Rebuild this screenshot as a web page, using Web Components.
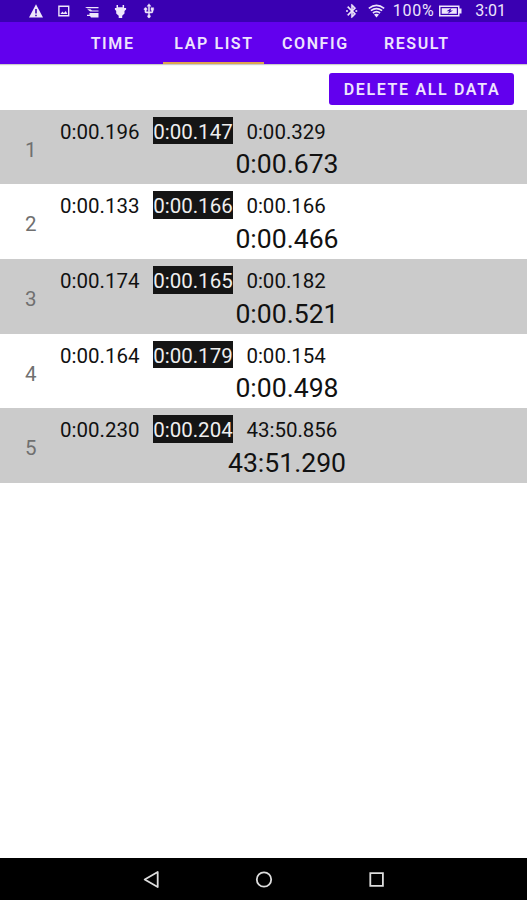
<!DOCTYPE html>
<html lang="en">
<head>
<meta charset="utf-8">
<title>Lap List</title>
<style>
  body {
    margin: 0;
    font-family: Roboto, "Liberation Sans", sans-serif;
    background: #fff;
  }
</style>
</head>
<body>
<lap-app></lap-app>

<script>
const laps = [
  { times: ['0:00.196', '0:00.147', '0:00.329'], total: '0:00.673' },
  { times: ['0:00.133', '0:00.166', '0:00.166'], total: '0:00.466' },
  { times: ['0:00.174', '0:00.165', '0:00.182'], total: '0:00.521' },
  { times: ['0:00.164', '0:00.179', '0:00.154'], total: '0:00.498' },
  { times: ['0:00.230', '0:00.204', '43:50.856'], total: '43:51.290' }
]

window.customElements.define('status-bar', class extends HTMLElement {
  constructor() {
    super();
    const root = this.attachShadow({ mode: 'open' });

    root.innerHTML = `
    <style>
      :host {
        display: flex;
        justify-content: space-between;
        align-items: center;
        box-sizing: border-box;
        height: 22px;
        padding: 0 21px 0 28px;
        background: #3a00b2;
        color: #eee6fb;
        font-size: 16px;
        line-height: 22px;
      }
      div {
        display: flex;
        align-items: center;
      }
      .left {
        gap: 12.2px;
      }
      svg {
        display: block;
        width: 16px;
        height: 16px;
        fill: currentColor;
      }
      .wifi {
        width: 17px;
        margin: 0 7.5px 0 8px;
      }
      .battery {
        width: 23px;
        margin: 0 13.5px 0 1px;
      }
      .percent {
        width: 45px;
        white-space: nowrap;
        letter-spacing: 0.8px;
      }
    </style>
    <div class="left">
      <svg viewBox="0 0 16 16"><path fill-rule="evenodd" d="M8 1.2 15 14.5H1ZM7.2 6v4.5h1.6V6ZM7.2 11.7v1.5h1.6v-1.5Z"/></svg>
      <svg viewBox="0 0 16 16"><path fill-rule="evenodd" d="M2.2 2.5h11.2v11H2.2ZM3.6 4v8.1H12V4ZM4.4 11l2-2.6 1.5 1.5L9.8 8l1.6 3Z"/></svg>
      <svg viewBox="0 0 16 16"><path d="M1 4h13.5v1.3H3.2ZM3.2 6.3h3.3L8 7.600h6.500v1H6.200ZM5.500 10h9v4.500H7l-1-1.500H3v-1.200h2.500Z"/></svg>
      <svg viewBox="0 0 16 16"><path d="M3.500 2H5v2.200h4.600V2h1.500v3h2v1.500L11.500 8v2.500L9.200 12.800V15H5.700v-2.200L3.200 10.500V8L1.900 6.500V5h1.600Z"/></svg>
      <svg viewBox="0 0 24 24" stroke="currentColor" stroke-width=".6"><path d="M15 7v4h1v2h-3V5h2l-3-4-3 4h2v8H8v-2.070A2.200 2.200 0 1 0 5.800 11v2a2 2 0 0 0 2 2H11v3.050a2.200 2.200 0 1 0 2 0V15h3a2 2 0 0 0 2-2v-2h1V7Z"/></svg>
    </div>
    <div>
      <svg viewBox="0 0 24 24" stroke="currentColor" stroke-width=".7"><path fill-rule="evenodd" d="M17.700 7.700 12 2h-1v7.600L6.400 5 5 6.400l5.600 5.600L5 17.600 6.400 19l4.600-4.600V22h1l5.700-5.700-4.300-4.300ZM13 5.800l1.900 1.900L13 9.600ZM14.900 16.300 13 18.200v-3.800Z"/><path d="M4.500 10.500 6 12l-1.500 1.500L3 12ZM18.500 10.500 20 12l-1.500 1.500L17 12Z"/></svg>
      <svg class="wifi" viewBox="0 0 17 16"><g fill="none" stroke="currentColor" stroke-width="1.600"><path d="M.8 5.300Q8.500-.5 16.200 5.300M2.900 7.700Q8.500 3.500 14.100 7.700M4.900 10Q8.500 7.200 12.100 10"/></g><path d="M6 11.500Q8.500 9.800 11 11.500L8.500 14.500Z"/></svg>
      <span class="percent">100%</span>
      <svg class="battery" viewBox="0 0 23 16"><path fill-rule="evenodd" d="M0 2.500h20.500v3H22.500v5h-2v3H0ZM1.500 4v8H19V4Z"/><path d="M2.700 5.200H17.800v5.600H2.700Z"/><path d="m12.500 5-5 3.300h2.800L8.500 11l5.500-3.500h-2.700Z" fill="#3a00b2"/></svg>
      <span>3:01</span>
    </div>
    `
  }
});

window.customElements.define('app-tab', class extends HTMLElement {
  constructor() {
    super();
    const root = this.attachShadow({ mode: 'open' });

    root.innerHTML = `
    <style>
      :host {
        display: block;
        box-sizing: border-box;
        height: 42px;
        padding-left: 1px;
        border-bottom: 2px solid transparent;
        color: #eee4fd;
        font-size: 16px;
        font-weight: 600;
        line-height: 43px;
        letter-spacing: 1.6px;
        text-align: center;
        white-space: nowrap;
      }
      :host([selected]) {
        border-bottom-color: #dda64e;
      }
    </style>
    <slot></slot>
    `
  }
});

window.customElements.define('tab-bar', class extends HTMLElement {
  constructor() {
    super();
    const root = this.attachShadow({ mode: 'open' });

    root.innerHTML = `
    <style>
      :host {
        display: grid;
        grid-template-columns: repeat(4, 101.4px);
        height: 42px;
        padding-left: 61.4px;
        background: #6200ee;
        box-shadow: 0 1px 1px #ccc;
      }
    </style>
    <slot></slot>
    `
  }
});

window.customElements.define('raised-button', class extends HTMLElement {
  constructor() {
    super();
    const root = this.attachShadow({ mode: 'open' });

    root.innerHTML = `
    <style>
      :host {
        display: block;
      }
      button {
        display: block;
        width: 185px;
        height: 32px;
        padding: 0 0 0 1px;
        border: 0;
        border-radius: 3px;
        background: #6200ee;
        color: #eee4fd;
        font: inherit;
        font-size: 16px;
        font-weight: 600;
        line-height: 33px;
        letter-spacing: 1.65px;
        white-space: nowrap;
      }
    </style>
    <button><slot></slot></button>
    `
  }
});

window.customElements.define('lap-row', class extends HTMLElement {
  constructor() {
    super();
    const root = this.attachShadow({ mode: 'open' });

    root.innerHTML = `
    <style>
      :host {
        display: grid;
        grid-template-columns: 47px 480px;
        height: 74.7px;
        color: #111;
      }
      :host(:nth-of-type(odd)) {
        background: #cbcbcb;
      }
      .number {
        padding-left: 25px;
        color: #707070;
        font-size: 20.5px;
        line-height: 80px;
      }
      .times {
        display: flex;
        gap: 13.7px;
        padding: 7.2px 0 0 13px;
        font-size: 20.5px;
        line-height: 28px;
      }
      .times ::slotted(*) {
        box-sizing: border-box;
        height: 27.5px;
        padding-top: 0.9px;
      }
      .times ::slotted(:nth-child(2)) {
        background: #151515;
        color: #eee;
      }
      .total {
        font-size: 26.6px;
        line-height: 39px;
        text-align: center;
      }
    </style>
    <div class="number"></div>
    <div>
      <div class="times"><slot></slot></div>
      <div class="total"></div>
    </div>
    `
  }

  connectedCallback() {
    this.shadowRoot.querySelector('.number').textContent = this.getAttribute('number')
    this.shadowRoot.querySelector('.total').textContent = this.getAttribute('total')
  }
});

window.customElements.define('nav-bar', class extends HTMLElement {
  constructor() {
    super();
    const root = this.attachShadow({ mode: 'open' });

    root.innerHTML = `
    <style>
      :host {
        display: flex;
        justify-content: center;
        align-items: center;
        gap: 94.5px;
        height: 42px;
        background: #000;
      }
      svg {
        display: block;
        width: 18px;
        height: 18px;
        fill: none;
        stroke: #ddd;
        stroke-width: 1.8;
      }
    </style>
    <svg viewBox="0 0 18 18"><path d="M15.700 2v15L2.700 9.500Z" stroke-linejoin="round"/></svg>
    <svg viewBox="0 0 18 18"><circle cx="9" cy="9.500" r="7.200"/></svg>
    <svg viewBox="0 0 18 18"><path d="M3.300 3.200h12.600v12.600H3.300Z"/></svg>
    `
  }
});

window.customElements.define('lap-app', class extends HTMLElement {
  constructor() {
    super();
    const root = this.attachShadow({ mode: 'open' });

    root.innerHTML = `
    <style>
      :host {
        display: flex;
        flex-direction: column;
        width: 527px;
        height: 900px;
        overflow: hidden;
      }
      main {
        flex: 1;
      }
      .actions {
        display: flex;
        justify-content: flex-end;
        box-sizing: border-box;
        height: 45.5px;
        padding: 8.5px 13px 0 0;
      }
    </style>
    <status-bar></status-bar>
    <tab-bar>
      <app-tab>TIME</app-tab>
      <app-tab selected>LAP LIST</app-tab>
      <app-tab>CONFIG</app-tab>
      <app-tab>RESULT</app-tab>
    </tab-bar>
    <main>
      <div class="actions"><raised-button>DELETE ALL DATA</raised-button></div>
      <section></section>
    </main>
    <nav-bar></nav-bar>
    `
  }

  connectedCallback() {
    const list = this.shadowRoot.querySelector('section');

    list.innerHTML = laps.map((lap, i) => `
      <lap-row number="${i + 1}" total="${lap.total}">
        ${lap.times.map(time => `<span>${time}</span>`).join('')}
      </lap-row>
    `).join('')
  }
});
</script>
</body>
</html>
